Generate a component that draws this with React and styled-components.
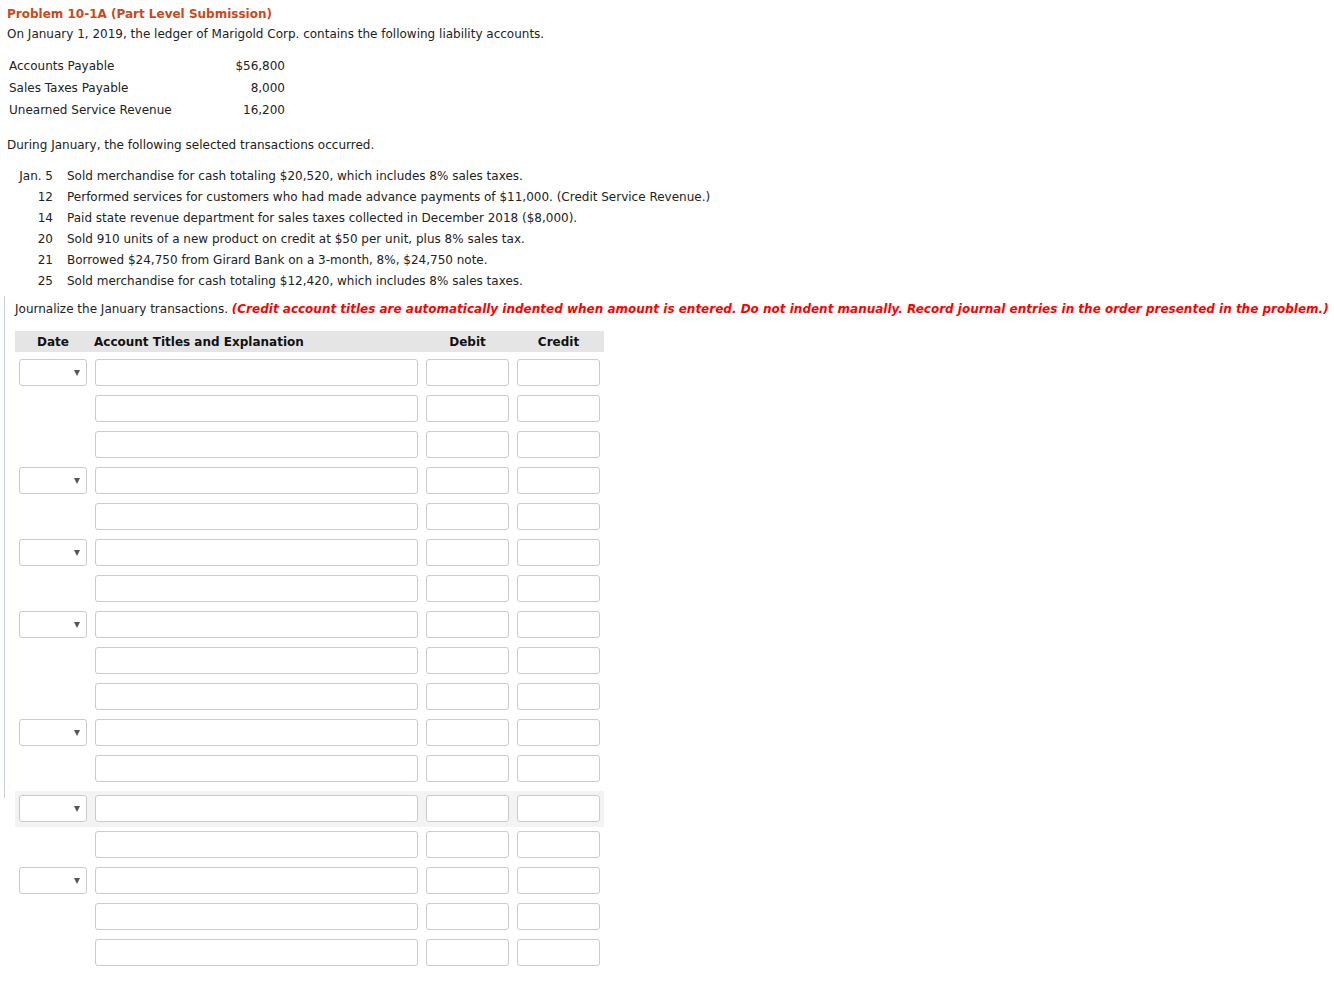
import React from "react";
import styled, { createGlobalStyle } from "styled-components";

const Global = createGlobalStyle`
  html, body { margin: 0; padding: 0; background: #fff; }
  body {
    font-family: "DejaVu Sans", Verdana, sans-serif;
    font-size: 12px;
    color: #222;
  }
`;

const Page = styled.div`
  padding: 5px 0 40px 7px;
`;

const Title = styled.div`
  font-weight: bold;
  color: #c94a1a;
  line-height: 18px;
`;

const Para = styled.div`
  line-height: 18px;
  margin-top: ${(p) => p.$mt || 0}px;
`;

const Accounts = styled.div`
  margin-top: 12px;
  display: grid;
  grid-template-columns: 216px 62px;
`;

const AccName = styled.div`
  line-height: 22px;
  padding-left: 2px;
`;

const AccAmount = styled.div`
  line-height: 22px;
  text-align: right;
`;

const Transactions = styled.div`
  margin-top: 12px;
  display: grid;
  grid-template-columns: 46px 1fr;
  column-gap: 14px;
`;

const TDate = styled.div`
  line-height: 21px;
  text-align: right;
`;

const TText = styled.div`
  line-height: 21px;
`;

const Journal = styled.div`
  position: relative;
  margin-left: -3px;
  padding: 2px 0 0 11px;
  margin-top: 6px;
  &::before {
    content: "";
    position: absolute;
    left: 0;
    top: -2px;
    width: 1px;
    height: 502px;
    background: #c7cfe0;
  }
`;

const Instruction = styled.div`
  line-height: 18px;
`;

const Red = styled.span`
  color: #f00;
  font-weight: bold;
  font-style: italic;
`;

const Grid = styled.div`
  margin-top: 13px;
  width: 589px;
`;

const Header = styled.div`
  display: grid;
  grid-template-columns: 76px 331px 91px 91px;
  background: #e5e5e5;
  height: 21px;
  align-items: center;
  font-weight: bold;
  color: #111;
  margin-bottom: 3px;
`;

const HCell = styled.div`
  text-align: ${(p) => (p.$left ? "left" : "center")};
  padding-left: ${(p) => (p.$left ? "3px" : "0")};
`;

const Row = styled.div`
  display: grid;
  grid-template-columns: 76px 331px 91px 91px;
  height: 36px;
  box-sizing: border-box;
  padding-top: 4px;
  background: ${(p) => (p.$active ? "#f3f3f3" : "transparent")};
  margin-top: ${(p) => (p.$active ? "4px" : "0")};
`;

const Cell = styled.div`
  padding: 0 4px;
`;

const Box = styled.div`
  box-sizing: border-box;
  height: 27px;
  border: 1px solid #cbcbcb;
  border-radius: 3px;
  background: #fff;
`;

const Select = styled(Box)`
  display: flex;
  align-items: center;
  justify-content: flex-end;
  padding-right: 6px;
`;

const Arrow = styled.span`
  width: 0;
  height: 0;
  border-left: 3px solid transparent;
  border-right: 3px solid transparent;
  border-top: 6px solid #555;
`;

const transactions = [
  ["Jan. 5", "Sold merchandise for cash totaling $20,520, which includes 8% sales taxes."],
  ["12", "Performed services for customers who had made advance payments of $11,000. (Credit Service Revenue.)"],
  ["14", "Paid state revenue department for sales taxes collected in December 2018 ($8,000)."],
  ["20", "Sold 910 units of a new product on credit at $50 per unit, plus 8% sales tax."],
  ["21", "Borrowed $24,750 from Girard Bank on a 3-month, 8%, $24,750 note."],
  ["25", "Sold merchandise for cash totaling $12,420, which includes 8% sales taxes."],
];

const groups = [3, 2, 2, 3, 2, 2, 3];

export default function App() {
  const rows = [];
  groups.forEach((n, gi) => {
    for (let i = 0; i < n; i++) {
      rows.push({ date: i === 0, active: gi === 5 && i === 0, key: `${gi}-${i}` });
    }
  });
  return (
    <>
      <Global />
      <Page>
        <Title>Problem 10-1A (Part Level Submission)</Title>
        <Para $mt={2}>On January 1, 2019, the ledger of Marigold Corp. contains the following liability accounts.</Para>
        <Accounts>
          <AccName>Accounts Payable</AccName>
          <AccAmount>$56,800</AccAmount>
          <AccName>Sales Taxes Payable</AccName>
          <AccAmount>8,000</AccAmount>
          <AccName>Unearned Service Revenue</AccName>
          <AccAmount>16,200</AccAmount>
        </Accounts>
        <Para $mt={15}>During January, the following selected transactions occurred.</Para>
        <Transactions>
          {transactions.map(([d, t]) => (
            <React.Fragment key={d}>
              <TDate>{d}</TDate>
              <TText>{t}</TText>
            </React.Fragment>
          ))}
        </Transactions>
        <Journal>
          <Instruction>
            Journalize the January transactions.{" "}
            <Red>
              (Credit account titles are automatically indented when amount is entered. Do not indent manually. Record journal entries in the order presented in the problem.)
            </Red>
          </Instruction>
          <Grid>
            <Header>
              <HCell>Date</HCell>
              <HCell $left>Account Titles and Explanation</HCell>
              <HCell>Debit</HCell>
              <HCell>Credit</HCell>
            </Header>
            {rows.map((r) => (
              <Row key={r.key} $active={r.active}>
                <Cell>
                  {r.date && (
                    <Select>
                      <Arrow />
                    </Select>
                  )}
                </Cell>
                <Cell><Box /></Cell>
                <Cell><Box /></Cell>
                <Cell><Box /></Cell>
              </Row>
            ))}
          </Grid>
        </Journal>
      </Page>
    </>
  );
}
